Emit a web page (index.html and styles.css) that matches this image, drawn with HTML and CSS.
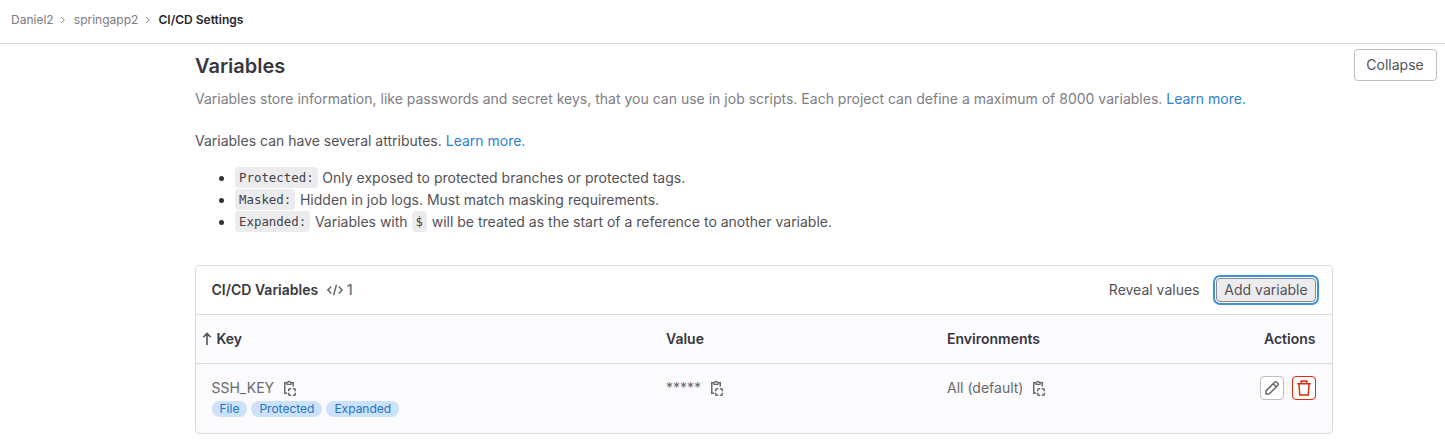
FILE: index.html
```html
<!DOCTYPE html>
<html lang="en">
<head>
<meta charset="utf-8">
<title>CI/CD Settings</title>
<link rel="stylesheet" href="styles.css">
</head>
<body>
<svg class="sprite" aria-hidden="true">
  <symbol id="copy" viewBox="0 0 16 16"><path d="M5 2.75H2.75v10.5H5.2M9 2.75h2.25V6.4"/><path d="M5 4.3V2.3h.9a1.2 1.2 0 0 1 2.3 0H9v2z" stroke-width="1.2"/><path d="M6.75 11.2V9.6q0-.85.85-.85h1.6M10.8 8.75h1.6q.85 0 .85.85v1.6M13.25 12.8v1.6q0 .85-.85.85h-1.6M9.2 15.25H7.6q-.85 0-.85-.85v-1.6"/></symbol>
</svg>
<nav class="crumbs">
  <a>Daniel2</a>
  <svg class="chev" viewBox="0 0 6 8"><path d="M1.3 1 4.3 4l-3 3"/></svg>
  <a>springapp2</a>
  <svg class="chev" viewBox="0 0 6 8"><path d="M1.3 1 4.3 4l-3 3"/></svg>
  <strong>CI/CD Settings</strong>
</nav>
<main class="section">
  <div class="top">
    <h1>Variables</h1>
    <button class="btn collapse">Collapse</button>
  </div>
  <p class="intro">Variables store information, like passwords and secret keys, that you can use in job scripts. Each project can define a maximum of 8000 variables. <a class="link">Learn more.</a></p>
  <p class="attrs">Variables can have several attributes. <a class="link">Learn more.</a></p>
  <ul class="list">
    <li><code>Protected:</code> Only exposed to protected branches or protected tags.</li>
    <li><code>Masked:</code> Hidden in job logs. Must match masking requirements.</li>
    <li><code>Expanded:</code> Variables with <code>$</code> will be treated as the start of a reference to another variable.</li>
  </ul>
  <div class="card">
    <div class="card-head">
      <h2>CI/CD Variables</h2>
      <svg class="icon code" viewBox="0 0 16 16"><path d="M4.3 4.5.9 8l3.4 3.5M11.7 4.5 15.1 8l-3.4 3.5M9.5 2.8l-3 10.4"/></svg>
      <span class="count">1</span>
      <button class="reveal">Reveal values</button>
      <button class="btn add">Add variable</button>
    </div>
    <div class="row head">
      <div class="key-head"><svg class="arrow" viewBox="0 0 10 14"><path d="M5 13V1.5M1.3 5.2 5 1.5l3.7 3.7"/></svg>Key</div>
      <div>Value</div>
      <div>Environments</div>
      <div class="right">Actions</div>
    </div>
    <div class="row data">
      <div>
        <div class="cell">SSH_KEY<svg class="icon"><use href="#copy"/></svg></div>
        <div class="badges"><span>File</span><span>Protected</span><span>Expanded</span></div>
      </div>
      <div class="cell">*****<svg class="icon"><use href="#copy"/></svg></div>
      <div class="cell">All (default)<svg class="icon"><use href="#copy"/></svg></div>
      <div class="actions">
        <button class="square"><svg class="icon" viewBox="0 0 16 16"><path d="M2 14v-3.1L10.6 2.3a1.5 1.5 0 0 1 2.1 0l1 1a1.5 1.5 0 0 1 0 2.1L5.1 14zM9.2 3.7l3.1 3.1"/></svg></button>
        <button class="square danger"><svg class="icon" viewBox="0 0 16 16"><path d="M1.2 3.75h13.6M5.2 3.5V1h5.6v2.5M3 4l.75 11h8.5L13 4"/></svg></button>
      </div>
    </div>
  </div>
</main>
</body>
</html>
```
FILE: styles.css
```css
* { box-sizing: border-box; }
body { margin: 0; height: 441px; overflow: hidden; background: #fff; color: #535257; font: 14px/20px Inter, "Noto Sans", sans-serif; }
h1, h2, p, ul { margin: 0; }
button { font: inherit; color: inherit; padding: 0; margin: 0; background: none; border: 0; white-space: nowrap; }
svg { fill: none; stroke: currentColor; flex: none; }
.sprite { display: none; }
.crumbs { display: flex; align-items: center; height: 44px; padding: 0 11px 4px; border-bottom: 1px solid #dcdcde; font-size: 12px; color: #7c7b80; white-space: nowrap; }
.crumbs strong { color: #28272d; font-weight: 600; }
.chev { width: 6px; height: 8px; margin: 0 7.4px 0 6.8px; }
.section { padding: 5px 8px 0 195px; }
.top { display: flex; justify-content: space-between; height: 32px; }
h1 { font-size: 20px; line-height: 34px; font-weight: 600; color: #38373d; }
.btn { border: 1px solid #bfbfc3; border-radius: 4px; }
.collapse { width: 83px; height: 32px; padding-right: 1px; }
.intro { margin-top: 8px; color: #7e7d83; white-space: nowrap; word-spacing: 0.03px; }
.link { color: #307fd0; }
.attrs { margin-top: 22px; }
.list { margin-top: 16px; padding-left: 40px; line-height: 22px; }
.list li::marker { color: #333238; }
code { display: inline-block; height: 21px; margin-right: 0.8px; padding: 0 4px; border-radius: 4px; background: #ececef; color: #434248; font: 12.4px/21px "DejaVu Sans Mono", monospace; vertical-align: top; }
.card { width: 1138px; height: 169px; margin-top: 32px; border: 1px solid #dcdcde; border-radius: 4px; background: #fbfafd; overflow: hidden; }
.card-head { display: flex; align-items: center; height: 49px; padding: 0 16px 0 15.5px; border-bottom: 1px solid #dcdcde; background: #fff; }
h2 { font-size: 14px; font-weight: 600; color: #38373d; }
.icon { width: 16px; height: 16px; stroke-width: 1.5; color: #6a696f; }
.code { margin-left: 8.5px; }
.count { margin-left: 4px; font-weight: 600; color: #7c7b80; }
.reveal { margin-left: auto; }
.add { width: 100px; height: 24px; margin: 0 0 0 16.5px; border-color: #89888d; background: #ececef; box-shadow: 0 0 0 1px #fff, 0 0 0 3px #428fdc; }
.row { display: grid; grid-template-columns: 454.5px 281px 300px 1fr; padding: 0 16.5px 0 15.5px; }
.head { height: 49px; align-items: center; border-bottom: 1px solid #dcdcde; font-weight: 600; color: #38373d; }
.key-head { display: flex; align-items: center; margin-left: -10px; }
.arrow { width: 10px; height: 14px; margin-right: 5px; stroke-width: 1.6; color: #535158; }
.right { text-align: right; }
.data { padding-top: 12px; padding-right: 16px; color: #6a696f; }
.cell { display: flex; align-items: center; height: 24px; gap: 8px; }
.badges { display: flex; gap: 4px; margin-top: 1px; }
.badges span { height: 16px; padding: 0 8px; border-radius: 8px; background: #cbe2f9; color: #2573c2; font-size: 12px; line-height: 16px; }
.actions { display: flex; justify-content: flex-end; gap: 8px; }
.square { display: flex; align-items: center; justify-content: center; width: 24px; height: 24px; border: 1px solid #bfbfc3; border-radius: 4px; background: #fff; }
.danger { border-color: #dd2b0e; }
.danger .icon { color: #dd2b0e; }
```
